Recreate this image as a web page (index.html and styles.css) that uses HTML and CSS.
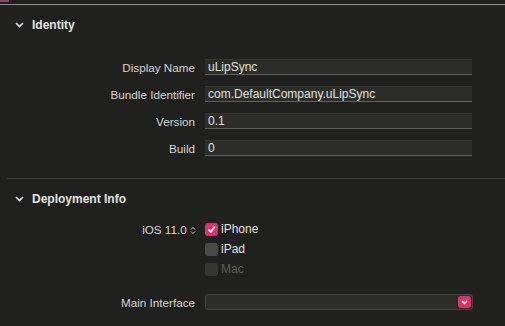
FILE: index.html
```html
<!DOCTYPE html>
<html>
<head>
    <meta charset="utf-8">
    <title>General</title>
    <link rel="stylesheet" href="styles.css">
</head>
<body>
    <div class="topbar"><span class="tab-mark"></span></div>

    <div class="section">
        <div class="section-head">
            <svg class="chev" width="9" height="6" viewBox="0 0 9 6"><path d="M1 1 L4.5 4.5 L8 1" fill="none" stroke="#e6e6e6" stroke-width="1.6"/></svg>
            <span>Identity</span>
        </div>
        <div class="rows">
            <div class="row"><label>Display Name</label><div class="field">uLipSync</div></div>
            <div class="row"><label>Bundle Identifier</label><div class="field">com.DefaultCompany.uLipSync</div></div>
            <div class="row"><label>Version</label><div class="field">0.1</div></div>
            <div class="row"><label>Build</label><div class="field">0</div></div>
        </div>
    </div>

    <div class="divider"></div>

    <div class="section">
        <div class="section-head">
            <svg class="chev" width="9" height="6" viewBox="0 0 9 6"><path d="M1 1 L4.5 4.5 L8 1" fill="none" stroke="#e6e6e6" stroke-width="1.6"/></svg>
            <span>Deployment Info</span>
        </div>
        <div class="deploy">
            <div class="row check-row">
                <label>iOS 11.0 <svg class="stepper" width="6" height="9" viewBox="0 0 6 9"><path d="M1 3.5 L3 1.5 L5 3.5 M1 5.5 L3 7.5 L5 5.5" fill="none" stroke="#cfcfcf" stroke-width="1"/></svg></label>
                <div class="check"><span class="box on"><svg width="11" height="11" viewBox="0 0 11 11"><path d="M2.5 5.5 L4.7 8 L8.8 2.6" fill="none" stroke="#fff" stroke-width="1.7"/></svg></span>iPhone</div>
            </div>
            <div class="row check-row"><label></label><div class="check"><span class="box"></span>iPad</div></div>
            <div class="row check-row"><label></label><div class="check off"><span class="box"></span>Mac</div></div>
        </div>
        <div class="row main-row">
            <label>Main Interface</label>
            <div class="field popup">
                <span class="pop-btn"><svg width="7" height="5" viewBox="0 0 7 5"><path d="M1 1 L3.5 3.5 L6 1" fill="none" stroke="#fff" stroke-width="1.4"/></svg></span>
            </div>
        </div>
    </div>
</body>
</html>
```

FILE: styles.css
```css
body {
    margin: 0;
    background-color: #20211e;
    color: #d6d6d4;
    font-family: "Liberation Sans", Arial, sans-serif;
    font-size: 11.7px;
}

.topbar {
    height: 4px;
    border-bottom: 1px solid #8a8b88;
    position: relative;
}

.tab-mark {
    position: absolute;
    left: 0;
    top: 0;
    width: 9px;
    height: 2px;
    background-color: #7d4866;
}

.section-head {
    display: flex;
    align-items: center;
    height: 14px;
    margin-top: 13px;
    padding-left: 15px;
    font-weight: bold;
    font-size: 12px;
    color: #e2e2e0;
}

.chev {
    margin-right: 8px;
}

.rows {
    margin-top: 27px;
    display: flex;
    flex-direction: column;
    gap: 11px;
}

.row {
    display: flex;
    align-items: center;
}

.row label {
    width: 205px;
    text-align: right;
    padding-right: 10px;
    box-sizing: border-box;
}

.field {
    width: 267px;
    height: 16px;
    box-sizing: border-box;
    background-color: #2c2d29;
    border-top: 1px solid #363733;
    border-bottom: 1px solid #60615d;
    padding: 1px 3px 0;
    line-height: 13px;
    color: #e0e0de;
    font-size: 12px;
}

.divider {
    margin: 22px 0 0 7px;
    height: 1px;
    background-color: #3b3c38;
}

.deploy {
    margin-top: 16px;
    display: flex;
    flex-direction: column;
    gap: 6px;
}

.deploy .row label {
    padding-right: 9px;
}

.check-row {
    height: 14px;
}

.stepper {
    vertical-align: -1px;
}

.check {
    display: flex;
    align-items: center;
    font-size: 12px;
    color: #e0e0de;
}

.check.off {
    color: #5d5e5a;
}

.box {
    width: 13px;
    height: 13px;
    border-radius: 3px;
    background-color: #4a4b47;
    margin-right: 3px;
    display: flex;
    align-items: center;
    justify-content: center;
}

.check.off .box {
    background-color: #353632;
}

.box.on {
    background-color: #d8336e;
}

.main-row {
    margin-top: 18px;
}

.popup {
    width: 268px;
    border: 1px solid #464743;
    border-radius: 3px;
    display: flex;
    justify-content: flex-end;
    align-items: center;
    padding: 0 1px;
}

.pop-btn {
    width: 13px;
    height: 12px;
    border-radius: 3px;
    background-color: #d8336e;
    display: flex;
    align-items: center;
    justify-content: center;
}
```
